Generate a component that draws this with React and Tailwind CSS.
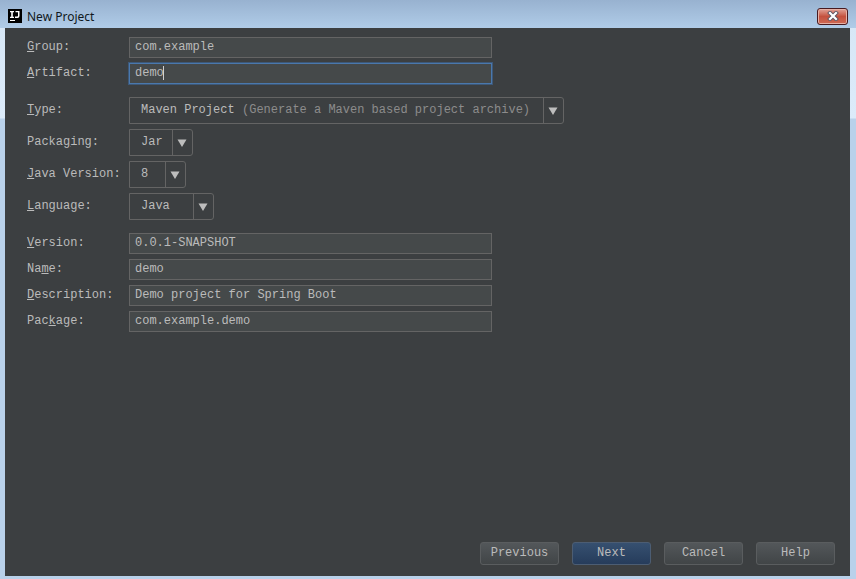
import React from "react";

function Mnemonic({ text, at }) {
  return (
    <>
      {text.slice(0, at)}
      <span className="underline decoration-1 underline-offset-1">{text[at]}</span>
      {text.slice(at + 1)}
    </>
  );
}

function Row({ id, label, at = 0, children }) {
  return (
    <div className="flex items-center">
      <label htmlFor={id} className="w-[102px] shrink-0 pb-[2px] leading-4 whitespace-nowrap">
        <Mnemonic text={label} at={at} />
      </label>
      {children}
    </div>
  );
}

function TextField({ id, label, at, value }) {
  return (
    <Row id={id} label={label} at={at}>
      <input
        id={id}
        type="text"
        defaultValue={value}
        className="h-[21px] w-full max-w-[363px] border border-[#646464] bg-[#45494a] px-[5px] pb-px outline-none"
      />
    </Row>
  );
}

function FocusedField({ id, label, at, value }) {
  return (
    <Row id={id} label={label} at={at}>
      <div className="relative w-full max-w-[363px]">
        <input
          id={id}
          type="text"
          defaultValue={value}
          className="block h-[21px] w-full border border-[#4a78ad] bg-[#45494a] px-[5px] pb-px caret-transparent outline-1 outline-[#3d5878]"
        />
        <span className="pointer-events-none absolute top-[3px] left-[34px] h-[14px] w-px bg-[#d0d0d0]" />
      </div>
    </Row>
  );
}

function Combo({ id, label, at, value, hint, width }) {
  return (
    <Row id={id} label={label} at={at}>
      <div className={`relative h-[27px] ${width}`}>
        <select
          id={id}
          className="block h-full w-full appearance-none rounded-r-[3px] border border-[#646464] bg-[#3c3f41] pr-5 pb-px pl-[11px] outline-none"
        >
          <option>{value}</option>
        </select>
        {hint && (
          <span className="pointer-events-none absolute top-[5px] left-[113px] leading-4 whitespace-nowrap text-[#8c8c8c]">
            {hint}
          </span>
        )}
        <span className="pointer-events-none absolute inset-y-0 right-0 flex w-[21px] items-center justify-center border-l border-[#646464] pr-[2px]">
          <svg width="10" height="8" viewBox="0 0 10 8" fill="#bdbdbd" aria-hidden="true">
            <path d="M0.5 0.5h9L5 8z" />
          </svg>
        </span>
      </div>
    </Row>
  );
}

function DialogButton({ children, primary }) {
  const look = primary
    ? "border-[#4c5d73] bg-linear-to-b from-[#365070] to-[#263c5b]"
    : "border-[#5a5d5f] bg-linear-to-b from-[#53575a] to-[#414547]";
  return (
    <button type="button" className={`h-[23px] w-[79px] rounded-[3px] border pb-px ${look}`}>
      {children}
    </button>
  );
}

function AppLogo() {
  return (
    <svg width="14" height="14" viewBox="0 0 14 14" aria-hidden="true">
      <rect width="14" height="14" fill="#000" />
      <path
        fill="#fff"
        d="M2 2h4v1.2H4.8v4.6H6V9H2V7.8h1.2V3.2H2zM7.5 2h4v5q0 2-2 2H7V7.6h2.2q.8 0 .8-.8V3.2H7.5zM2 11h5v1H2z"
      />
    </svg>
  );
}

function CloseButton() {
  return (
    <button
      type="button"
      aria-label="Close"
      className="flex h-[17px] w-[31px] items-center justify-center rounded-[3px] border border-[#481a20] bg-linear-to-b from-[#e0a297] from-0% via-[#c4513e] via-50% to-[#cf6a54] inset-ring inset-ring-[#e6b0a5]"
    >
      <svg width="12" height="10" viewBox="0 0 12 10" aria-hidden="true">
        <path d="M3 2l6 6M9 2l-6 6" stroke="#5d5562" strokeWidth="4" strokeLinecap="square" />
        <path d="M3 2l6 6M9 2l-6 6" stroke="#fff" strokeWidth="2.2" strokeLinecap="square" />
      </svg>
    </button>
  );
}

export default function App() {
  return (
    <div className="flex min-h-screen flex-col bg-linear-to-b from-[#d6e6f5] from-0% via-[#dcebfa] via-[118px] to-[#b9d1ea] to-[119px] font-['Liberation_Mono','Courier_New',monospace] text-[12px] text-[#bbbbbb]">
      <header className="flex h-7 shrink-0 items-center bg-linear-to-b from-[#98b2d0] to-[#b0cce8] pt-1 pr-2 pl-2 font-['Noto_Sans','Open_Sans',sans-serif] text-[#101820]">
        <AppLogo />
        <h1 className="ml-[5px] flex-1 pt-0.5 leading-4">New Project</h1>
        <CloseButton />
      </header>
      <main className="mr-[6px] mb-[3px] ml-[5px] flex flex-1 flex-col bg-[#3c3f41] pt-[9px] pr-[15px] pb-[11px] pl-[22px]">
        <form className="flex flex-col gap-[13px]">
          <div className="flex flex-col gap-[5px]">
            <TextField id="group" label="Group:" value="com.example" />
            <FocusedField id="artifact" label="Artifact:" value="demo" />
          </div>
          <div className="flex flex-col gap-[5px]">
            <Combo
              id="type"
              label="Type:"
              value="Maven Project"
              hint="(Generate a Maven based project archive)"
              width="w-[435px]"
            />
            <Combo id="packaging" label="Packaging:" at={5} value="Jar" width="w-[64px]" />
            <Combo id="java" label="Java Version:" value="8" width="w-[57px]" />
            <Combo id="language" label="Language:" value="Java" width="w-[85px]" />
          </div>
          <div className="flex flex-col gap-[5px]">
            <TextField id="version" label="Version:" value="0.0.1-SNAPSHOT" />
            <TextField id="name" label="Name:" at={2} value="demo" />
            <TextField id="description" label="Description:" value="Demo project for Spring Boot" />
            <TextField id="package" label="Package:" at={3} value="com.example.demo" />
          </div>
        </form>
        <footer className="mt-auto flex justify-end gap-[13px]">
          <DialogButton>Previous</DialogButton>
          <DialogButton primary>Next</DialogButton>
          <DialogButton>Cancel</DialogButton>
          <DialogButton>Help</DialogButton>
        </footer>
      </main>
    </div>
  );
}
